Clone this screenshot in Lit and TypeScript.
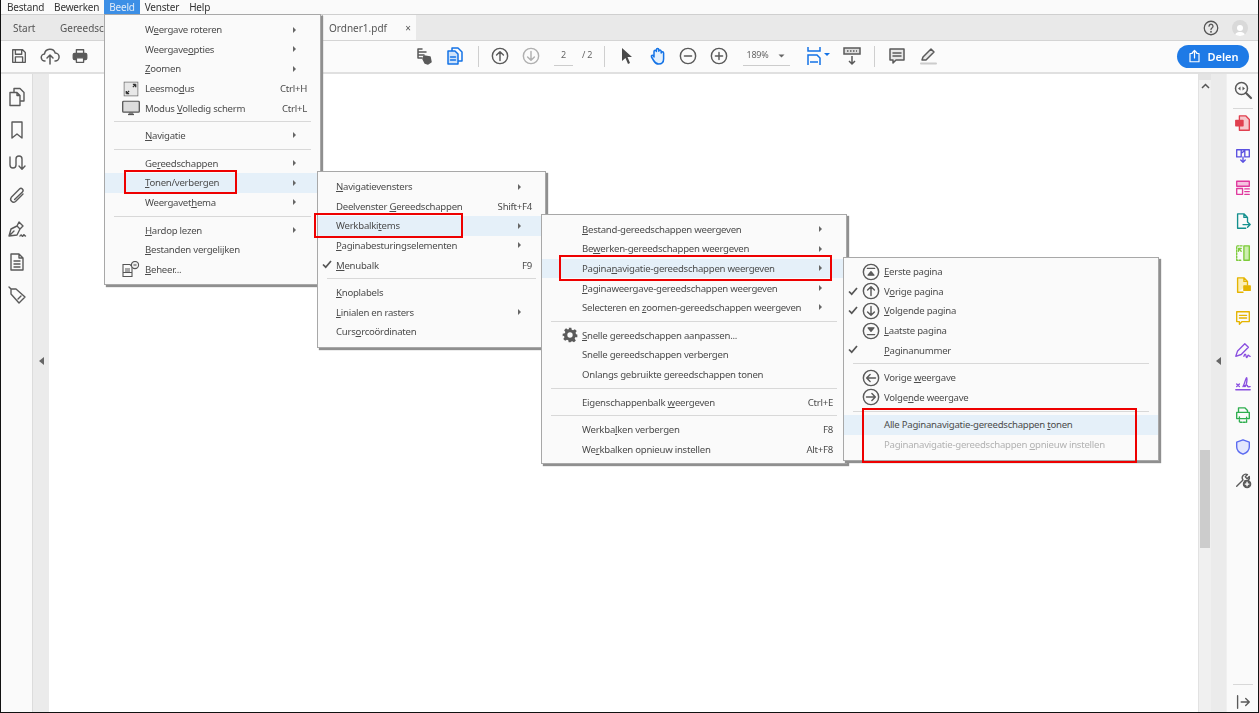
import { LitElement, html, css, svg, nothing } from "lit";
import { customElement } from "lit/decorators.js";

type Row = { t: string; s?: string; sub?: boolean; chk?: boolean; ic?: any; hi?: boolean; off?: boolean } | "sep";

const G = "#5a5a5a";
const ci = (inner: any, c = G) => html`<svg viewBox="0 0 20 20" width="18" height="18" fill="none" stroke=${c} stroke-width="1.6" stroke-linecap="round" stroke-linejoin="round"><circle cx="10" cy="10" r="8.500"/>${inner}</svg>`;
const up = svg`<path d="M10 15V5.5M6.2 9L10 5.2 13.8 9"/>`;
const down = svg`<path d="M10 5v9.5M6.2 11L10 14.8 13.8 11"/>`;
const left = svg`<path d="M15 10H5.5M9 6.2L5.2 10 9 13.8"/>`;
const right = svg`<path d="M5 10h9.5M11 6.2L14.8 10 11 13.8"/>`;
const first = svg`<path d="M6 6h8"/><path d="M6.8 13.5L10 9.8l3.200 3.700z" fill="#5a5a5a"/>`;
const last = svg`<path d="M6 14h8"/><path d="M6.800 6.500L10 10.200l3.200-3.700z" fill="#5a5a5a"/>`;
const ic = (inner: any, s = 20, c = G, w = 1.5) => html`<svg viewBox="0 0 20 20" width=${s} height=${s} fill="none" stroke=${c} stroke-width=${w} stroke-linecap="round" stroke-linejoin="round">${inner}</svg>`;

const M1: Row[] = [
  { t: "W_eergave roteren", sub: true }, { t: "Weergave_opties", sub: true }, { t: "_Zoomen", sub: true },
  { t: "Leesmo_dus", s: "Ctrl+H", ic: html`<svg viewBox="0 0 16 16" width="15" height="15"><rect x=".5" y=".5" width="15" height="15" fill="#e8e8e8" stroke="#666"/><path d="M3 13l3-3M3 13v-3M3 13h3M13 3l-3 3M13 3v3M13 3h-3" stroke="#333" stroke-width="1.4" fill="none"/></svg>` },
  { t: "Modus _Volledig scherm", s: "Ctrl+L", ic: html`<svg viewBox="0 0 18 15" width="18" height="15"><rect x=".7" y=".7" width="16.6" height="11" rx="1" fill="#ddd" stroke="#555" stroke-width="1.3"/><path d="M6 14h6M8 12v2M10 12v2" stroke="#555" stroke-width="1.3"/></svg>` },
  "sep", { t: "_Navigatie", sub: true }, "sep",
  { t: "Ge_reedschappen", sub: true }, { t: "_Tonen/verbergen", sub: true, hi: true }, { t: "Weergavet_hema", sub: true }, "sep",
  { t: "_Hardop lezen", sub: true }, { t: "_Bestanden vergelijken" },
  { t: "_Beheer...", ic: html`<svg viewBox="0 0 18 16" width="18" height="16" fill="none" stroke="#555" stroke-width="1.1"><path d="M1 3.500h7l2 2v10H1zM3 8h5M3 10h5M1 11.500h9"/><circle cx="13" cy="4" r="3.600" fill="#eee"/><path d="M11.500 4h3"/></svg>` },
];
const M2: Row[] = [
  { t: "_Navigatievensters", sub: true }, { t: "Deelvenster _Gereedschappen", s: "Shift+F4" },
  { t: "Werkbalki_tems", sub: true, hi: true }, { t: "_Paginabesturingselementen", sub: true },
  { t: "_Menubalk", s: "F9", chk: true }, "sep",
  { t: "_Knoplabels" }, { t: "_Linialen en rasters", sub: true }, { t: "Curs_orcoördinaten" },
];
const gear = html`<svg viewBox="0 0 24 24" width="16" height="16" fill="#5a5a5a"><path fill-rule="evenodd" d="M10 1h4l.6 3.2 2 .8 2.700-1.800 2.800 2.800-1.800 2.700.8 2L23 11.400v4l-3.200.1-.8 2 1.800 2.700-2.800 2.800-2.700-1.800-2 .8L13 23h-3l-.6-3.200-2-.8-2.700 1.800-2.800-2.800 1.800-2.700-.8-2L1 14v-4l3.200-.6.8-2L3.200 4.700 6 1.900l2.700 1.800 2-.8zM12 8a4 4 0 100 8 4 4 0 000-8z"/></svg>`;
const M3: Row[] = [
  { t: "_Bestand-gereedschappen weergeven", sub: true }, { t: "Be_werken-gereedschappen weergeven", sub: true },
  { t: "Pagina_navigatie-gereedschappen weergeven", sub: true, hi: true }, { t: "_Paginaweergave-gereedschappen weergeven", sub: true },
  { t: "Selecteren en _zoomen-gereedschappen weergeven", sub: true }, "sep",
  { t: "_Snelle gereedschappen aanpassen...", ic: gear }, { t: "Snelle gereedschappen verbergen" }, { t: "Onlangs gebruikte gereedschappen tonen" }, "sep",
  { t: "Eigenschappenbalk _weergeven", s: "Ctrl+E" }, "sep",
  { t: "Werkba_lken verbergen", s: "F8" }, { t: "We_rkbalken opnieuw instellen", s: "Alt+F8" },
];
const M4: Row[] = [
  { t: "_Eerste pagina", ic: ci(first) }, { t: "V_orige pagina", chk: true, ic: ci(up) }, { t: "_Volgende pagina", chk: true, ic: ci(down) },
  { t: "_Laatste pagina", ic: ci(last) }, { t: "_Paginanummer", chk: true }, "sep",
  { t: "Vorige _weergave", ic: ci(left) }, { t: "Volge_nde weergave", ic: ci(right) }, "sep",
  { t: "Alle Paginanavigatie-gereedschappen _tonen", hi: true }, { t: "Paginanavigatie-gereedschappen _opnieuw instellen", off: true },
];

const label = (t: string) => {
  const i = t.indexOf("_");
  return i < 0 ? t : html`${t.slice(0, i)}<u>${t[i + 1]}</u>${t.slice(i + 2)}`;
};

const leftIcons = [
  svg`<path d="M7 5V1.500h6l4 4V14h-4M3 5.500h7l3 3v10H3zM10 5.500v3h3"/>`,
  svg`<path d="M5 2h10v16l-5-4-5 4z"/>`,
  svg`<path d="M3 4v8a3 3 0 006 0V6a3 3 0 016 0v9M12 13l3 3.200 3-3.200"/>`,
  svg`<path d="M16 8l-7.500 7.500a3 3 0 01-4.200-4.200L12.500 3a2 2 0 012.900 2.900L7.600 13.600"/>`,
  svg`<path d="M2 17l2-7 6-3 3 3-3 6zM2 17l5-5M10 7l2-4 4 4-3 3M13 17c1-2 1.500-1 2 0s1 0 1.500-1 1 1 2 1"/>`,
  svg`<path d="M4 2h8l4 4v12H4zM12 2v4h4M7 9h6M7 12h6M7 15h6"/>`,
  svg`<path d="M2 2l2 2M4 4h5l9 8-6 6-8-9zM11 14l3-3"/>`,
];
const R = (c: string, inner: any) => ({ c, inner });
const rightIcons = [
  R("#e0404f", svg`<path d="M6 7V2h7l4 4v12H6v-5" fill="#f6c9cd"/><rect x="2" y="7" width="8" height="6" fill="#e0404f"/>`),
  R("#5a50e0", svg`<path d="M3 3h5v8H3zM12 3h5v8h-5zM8 3l4 0M10 11v6M7.500 14.500l2.500 2.500 2.500-2.500M8 7l4-3"/>`),
  R("#e0399e", svg`<rect x="3" y="2.500" width="14" height="5.500" fill="#f5c3e0"/><rect x="3" y="10.500" width="6.500" height="6.500"/><path d="M12 11h5M12 14h5M12 17h5"/>`),
  R("#14908e", svg`<path d="M4 18V2h7l4 4v5M11 2v4h4M4 18h9M10 14h8M15 11l3 3-3 3"/>`),
  R("#7dcb3a", svg`<rect x="11" y="2" width="6" height="16" fill="#cdeeb0"/><path d="M9 2H3v16h6" stroke-dasharray="2 1.500"/><path d="M8 8l-3-3M5 8V5h3"/>`),
  R("#e5b400", svg`<path d="M4 18V2h7l4 4v4M11 2v4h4M4 18h6" fill="#fbeeb5"/><rect x="11" y="11" width="7" height="5" fill="#e5b400"/>`),
  R("#e5b400", svg`<path d="M3 3h14v11H9l-3 3v-3H3zM6 7h8M6 10h8"/>`),
  R("#8a4fe0", svg`<path d="M2 17l2-6 8-8 4 4-8 8zM11 17c1-3 2-3 2.500 0s1.500 0 2-1 1 1 2.500 1"/>`),
  R("#8a4fe0", svg`<path d="M2 17.500h16M3 11l3 3M6 11l-3 3M10 14c2-3 3-10 4-10s0 10-2 10 3-3 3-1 1 1 3 1"/>`),
  R("#2eae4e", svg`<path d="M5 7V2h7l3 3v2M3 7h14v7H3z"/><path d="M6 12v6h8v-6" stroke-dasharray="2 1.500"/>`),
  R("#5a6af0", svg`<path d="M10 2l7 2.500V10c0 4-3 6.500-7 8-4-1.500-7-4-7-8V4.500z" fill="#e3e6fd"/>`),
  R("#5a5a5a", svg`<path d="M3 17l7-7a4 4 0 015-6l-2.500 2.500 2 2L17 6a4 4 0 01-5 5"/><circle cx="14.500" cy="14.500" r="4" fill="#5a5a5a"/><path d="M12.500 14.500h4M14.500 12.500v4" stroke="#fff"/>`),
];

@customElement("app-root")
export class AppRoot extends LitElement {
  static styles = css`
    :host { display: block; width: 1259px; height: 713px; overflow: hidden; position: relative;
      font-family: "Noto Sans", "Open Sans", sans-serif; color: #4c4c4c; font-size: 9.600px; letter-spacing: -.25px; }
    * { box-sizing: border-box; }
    .shell { width: 1259px; height: 713px; display: grid; grid-template-rows: 15px 26px 33px 1fr;
      border-left: 1px solid #111; border-right: 1px solid #111; border-bottom: 1px solid #111; background: #fff; filter: blur(.4px); }
    .menubar { display: flex; align-items: center; background: #fafafa; padding-left: 1px; color: #333; border-bottom: 1px solid #cfcfcf; font-size: 10px; letter-spacing: -.2px; }
    .menubar span { padding: 0 5px; height: 14px; line-height: 14px; }
    .menubar .on { background: #3c8fe6; color: #dfeaf8; }
    .tabs { display: flex; background: #e9e9e9; border-bottom: 1px solid #d4d4d4; align-items: center; color: #555; font-size: 10px; letter-spacing: 0; }
    .tabs .t1 { width: 59px; padding-left: 12px; }
    .tabs .t2 { width: 262px; overflow: hidden; white-space: nowrap; }
    .doc { width: 94px; height: 25px; background: #fafafa; border-left: 1px solid #bbb; display: flex; align-items: center; justify-content: space-between; padding: 0 5px 0 6px; align-self: flex-start; }
    .grow { flex: 1; }
    .tabs .help { display: flex; width: 29px; justify-content: center; margin-right: 7px; }
    .ava { width: 16px; height: 16px; border-radius: 50%; background: #d9d9d9; margin-right: 10px; display: flex; align-items: flex-end; justify-content: center; overflow: hidden; }
    .tool { display: flex; align-items: center; background: #fbfbfb; border-bottom: 2px solid #e0e0e0; padding-bottom: 1px; }
    .tb { width: 31px; display: flex; justify-content: center; flex: none; }
    .sep { width: 1px; height: 21px; background: #cfcfcf; flex: none; }
    .delen { width: 72px; height: 23px; border-radius: 12px; background: #1e7ae6; color: #fff; font-weight: 600; font-size: 11px; letter-spacing: 0; display: flex; align-items: center; justify-content: center; gap: 5px; margin-right: 9px; }
    .num { border-bottom: 1px solid #ccc; text-align: center; height: 20px; line-height: 18px; color: #666; flex: none; font-size: 9px; }
    .main { display: grid; grid-template-columns: 32px 16px 1fr 13px 15px 32px; min-height: 0; }
    .rail { background: #fafafa; display: flex; flex-direction: column; align-items: center; }
    .rail.l { border-right: 1px solid #dcdcdc; padding-top: 13px; gap: 13px; }
    .rail.r { padding-top: 6px; border-left: 1px solid #f0f0f0; }
    .rail.r svg { margin-bottom: 14.400px; flex: none; }
    .rail .dv { width: 20px; height: 1px; background: #d8d8d8; margin: -6px 0 5px; flex: none; }
    .gut { background: #ebebeb; display: flex; align-items: center; justify-content: center; padding-bottom: 64px; }
    .arrow { width: 0; height: 0; border-top: 4px solid transparent; border-bottom: 4px solid transparent; border-right: 5px solid #666; }
    .page { background: #fff; }
    .scroll { background: #f0f0f0; border-left: 1px solid #e2e2e2; display: flex; flex-direction: column; align-items: center; }
    .scroll .cap { width: 100%; height: 6px; background: #e4e4e4; }
    .scroll .chev { margin-top: 3px; margin-bottom: 361px; flex: none; }
    .scroll .thumb { width: 10px; height: 98px; background: #cccccc; }
    .rfoot { margin-top: auto; display: flex; flex-direction: column; align-items: center; gap: 8px; padding-bottom: 1px; }
    .rfoot i { width: 20px; height: 1px; background: #d8d8d8; display: block; }
    .rail.r .rfoot svg { margin: 0; }

    .menu { position: absolute; background: #fafafa; border: 1px solid #a8a8a8; box-shadow: 2px 2px 1px #8f8f8f; filter: blur(.4px); color: #4c4c4c; }
    .row { align-items: center; display: flex; height: 19.600px; white-space: nowrap; position: relative; }
    .row.hi { background: #e5f0f9; }
    .row.off { color: #b2b2b2; }
    .sc { position: absolute; right: 13px; text-align: right; }
    .sub { position: absolute; width: 0; height: 0; border-top: 3px solid transparent; border-bottom: 3px solid transparent; border-left: 3.500px solid #666; }
    .row .sub { right: 24px; top: 6.500px; }
    .chk { position: absolute; top: 3px; }
    .icn { position: absolute; top: 50%; transform: translate(-50%, -50%); display: flex; }
    .hr { height: 8px; display: flex; align-items: center; padding: 0 9px; }
    .hr::before { content: ""; flex: 1; height: 1px; background: #d8d8d8; }
    u { text-underline-offset: 1px; text-decoration-thickness: 1px; }
    .red { position: absolute; border: 2px solid #ee0000; pointer-events: none; }
    .numsub { position: relative; }
    .numsub .sub { transform: rotate(90deg); right: 7px; top: 7px; }
    .fit { justify-content: flex-start; }
  `;

  menu(rows: Row[], x: number, y: number, w: number, textX: number, iconX: number, chkX: number, h: number, pad: number) {
    return html`<div class="menu" style="left:${x}px;top:${y}px;width:${w}px;height:${h}px;padding-top:${pad}px">
      ${rows.map((r) => r === "sep" ? html`<div class="hr"></div>` : html`
        <div class="row ${r.hi ? "hi" : ""} ${r.off ? "off" : ""}" style="padding-left:${textX}px">
          ${r.chk ? html`<svg class="chk" style="left:${chkX}px" width="12" height="12" viewBox="0 0 12 12" fill="none" stroke="#555" stroke-width="1.700"><path d="M2 6.500l2.700 2.700L10 3"/></svg>` : nothing}
          ${r.ic ? html`<span class="icn" style="left:${iconX}px">${r.ic}</span>` : nothing}
          <span>${label(r.t)}</span>
          ${r.s ? html`<span class="sc">${r.s}</span>` : nothing}
          ${r.sub ? html`<span class="sub"></span>` : nothing}
        </div>`)}
    </div>`;
  }

  render() {
    return html`
      <div class="shell">
        <div class="menubar"><span>Bestand</span><span>Bewerken</span><span class="on">Beeld</span><span>Venster</span><span>Help</span></div>
        <div class="tabs">
          <span class="t1">Start</span><span class="t2">Gereedschappen</span>
          <span class="doc"><span>Ordner1.pdf</span><span>×</span></span>
          <span class="grow"></span>
          <span class="help">${ic(svg`<circle cx="10" cy="10" r="7.500"/><path d="M7.800 8a2.200 2.200 0 114 1.300c-.8.8-1.800 1-1.800 2.300"/><circle cx="10" cy="14.200" r=".4"/>`, 18, "#555", 1.4)}</span>
          <span class="ava"><svg width="10" height="13" viewBox="0 0 10 13" fill="#fff"><circle cx="5" cy="5" r="3"/><path d="M0 13c0-3 2-4 5-4s5 1 5 4z"/></svg></span>
        </div>
        <div class="tool">
          <span class="tb" style="margin-left:3px;width:30.500px">${ic(svg`<path d="M3 3h11l3 3v11H3zM6 3v5h7V3M6 17v-6h8v6"/>`, 18)}</span>
          <span class="tb" style="width:30.500px">${ic(svg`<path d="M5 15a3.500 3.500 0 01-.5-7 5.500 5.500 0 0110.700-1A4 4 0 0115 15M10 18V9.500M7 12l3-3 3 3"/>`, 20)}</span>
          <span class="tb" style="width:30.500px">${ic(svg`<path d="M6 7V3h8v4" /><rect x="2.500" y="7" width="15" height="7" rx="1.500" fill="#5a5a5a"/><path d="M6 12h8v5H6z" fill="#fff"/>`, 18)}</span>
          <span style="width:313.500px;flex:none"></span>
          <span class="tb" style="width:30px">${ic(svg`<path d="M8 3H4v3h8M4 6v3h6M4 9v3h4"/><path d="M9 13l1-3 6 1 1 5-3 2-3-1z" fill="#5a5a5a"/>`, 20)}</span>
          <span class="tb" style="width:32px">${ic(svg`<path d="M7 5V2h6l4 4v9h-4" /><path d="M3 5h7l3 3v10H3z" fill="#cfe3fa"/><path d="M5.500 11h5M5.500 14h5"/>`, 20, "#1473e6")}</span>
          <span class="sep" style="margin-left:6.500px"></span>
          <span class="tb" style="margin-left:6px">${ci(up)}</span>
          <span class="tb">${ci(down, "#b0b0b0")}</span>
          <span class="num" style="width:19px;margin-left:7.500px">2</span>
          <span class="num" style="width:25px;border:0;margin-left:1.500px">/ 2</span>
          <span class="sep" style="margin-left:4px"></span>
          <span class="tb" style="margin-left:7px"><svg width="16" height="18" viewBox="0 0 16 18" fill="#4a4a4a"><path d="M3 1l10 9H8.500l2.500 6-2 1-2.500-6L3 14z"/></svg></span>
          <span class="tb" style="width:30px">${ic(svg`<path d="M6 11V5.500a1.200 1.200 0 012.400 0V3.800a1.200 1.200 0 012.400 0v1.500a1.200 1.200 0 012.400 0V7a1.200 1.200 0 012.400 0v6c0 3-2 5-5 5-2.500 0-3.500-1-5-3.500L3.500 11c-.7-1.500 1-2.300 2-1z" fill="#e3f0fd"/>`, 20, "#1473e6")}</span>
          <span class="tb">${ci(svg`<path d="M6 10h8"/>`)}</span>
          <span class="tb">${ci(svg`<path d="M6 10h8M10 6v8"/>`)}</span>
          <span class="num numsub" style="width:47px;margin-left:8px;text-align:left;padding-left:4px">189%<span class="sub"></span></span>
          <span class="tb fit" style="margin-left:16px;width:26px"><svg width="26" height="20" viewBox="0 0 26 20" fill="none" stroke="#1473e6" stroke-width="1.500"><path d="M2 1v4h12V1M2 19V9h9l3 3v7M4 16h8"/><path d="M18 7h6l-3 3z" fill="#1473e6" stroke="none"/></svg></span>
          <span class="tb" style="margin-left:5px"><svg width="18" height="20" viewBox="0 0 18 20" fill="none" stroke="#5a5a5a" stroke-width="1.500"><rect x="1" y="2" width="16" height="6" fill="#ddd"/><path d="M4 5h10" stroke-dasharray="1.500 1.500"/><path d="M9 10v8M6 15l3 3 3-3"/></svg></span>
          <span class="sep" style="margin-left:6px"></span>
          <span class="tb" style="margin-left:6.500px">${ic(svg`<path d="M3 3h14v11H9l-3 3v-3H3z" fill="#e8e8e8"/><path d="M6 7h8M6 10h8"/>`, 20)}</span>
          <span class="tb">${ic(svg`<path d="M4 14l1-3 8-8 3 3-8 8z" fill="#e8e8e8"/><path d="M3 17.500h15" stroke="#ccc" stroke-width="2"/>`, 20)}</span>
          <span class="grow"></span>
          <span class="delen">${ic(svg`<path d="M7 6H4v11h12V6h-3M10 12V2M7 5l3-3 3 3"/>`, 15, "#fff", 1.600)}Delen</span>
        </div>
        <div class="main">
          <div class="rail l">${leftIcons.map((p) => ic(p, 20, G, 1.4))}</div>
          <div class="gut"><span class="arrow"></span></div>
          <div class="page"></div>
          <div class="scroll"><div class="cap"></div>
            <svg class="chev" width="9" height="6" viewBox="0 0 9 6" fill="none" stroke="#555" stroke-width="1.500"><path d="M1 5l3.500-3.500L8 5"/></svg>
            <div class="thumb"></div></div>
          <div class="gut"><span class="arrow"></span></div>
          <div class="rail r">
            ${ic(svg`<circle cx="8.500" cy="8.500" r="6"/><path d="M13 13l5 5" stroke-width="2.200"/><path d="M7.500 6.500L5 8.500l2.500 2zM9.500 6.500l2.500 2-2.500 2z" fill="#5a5a5a" stroke="none"/>`, 20)}
            <div class="dv"></div>
            ${rightIcons.map((r) => ic(r.inner, 18, r.c, 1.5))}
            <div class="rfoot"><i></i>${ic(svg`<path d="M4 3v14M8 10h9M13 6l4 4-4 4"/>`, 18)}</div>
          </div>
        </div>
      </div>
      ${this.menu(M1, 104, 14, 217, 40, 26, 0, 271, 5)}
      ${this.menu(M2, 317, 171, 229, 18, 0, 3, 177, 5)}
      ${this.menu(M3, 541, 214, 306, 40, 28, 0, 250, 4.5)}
      ${this.menu(M4, 843, 257, 316, 40, 27, 3, 204, 4)}
      <div class="red" style="left:124px;top:170px;width:113px;height:24px"></div>
      <div class="red" style="left:314px;top:213px;width:149px;height:25px"></div>
      <div class="red" style="left:559px;top:255px;width:273px;height:26px"></div>
      <div class="red" style="left:862px;top:408px;width:275px;height:55px"></div>
    `;
  }
}
